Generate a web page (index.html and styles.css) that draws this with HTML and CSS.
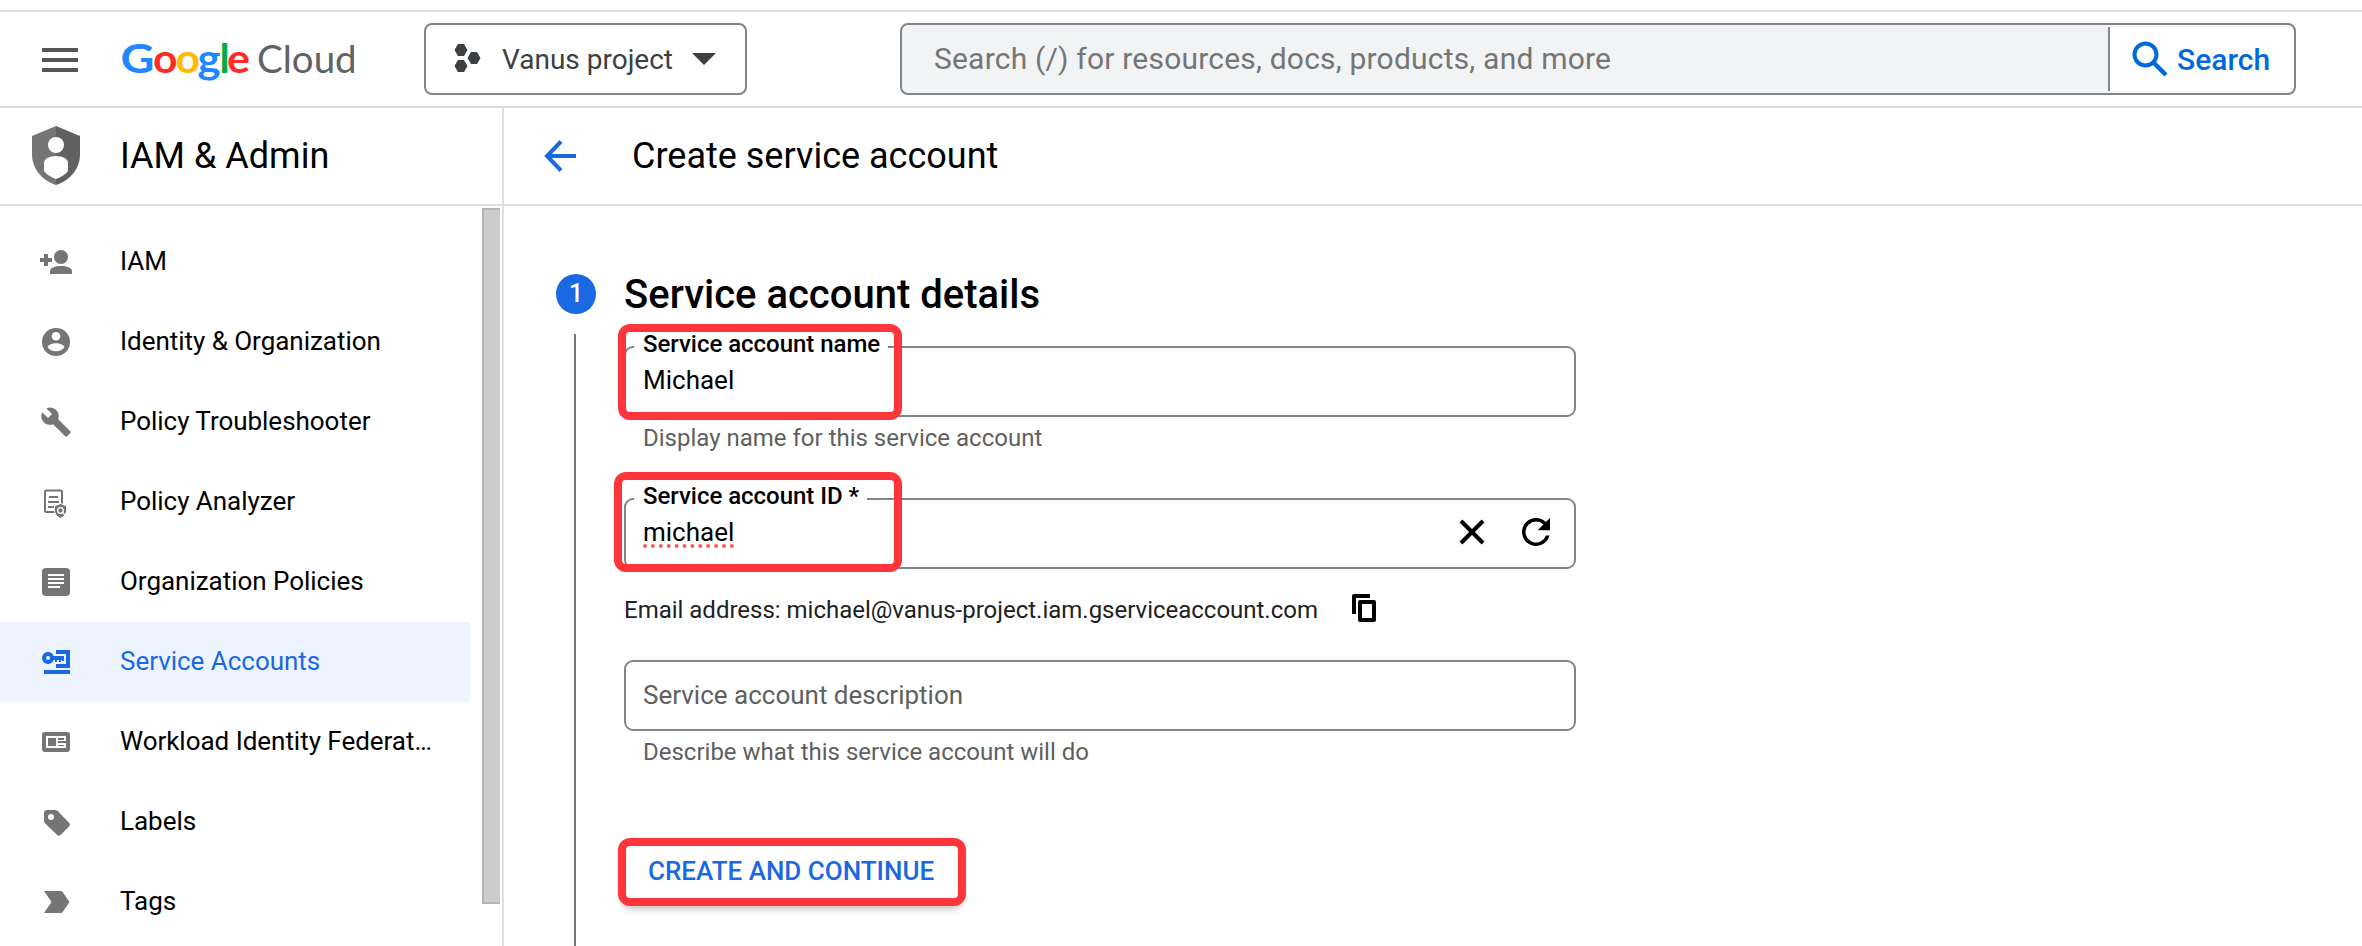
FILE: index.html
```html
<!DOCTYPE html>
<html lang="en">
<head>
<meta charset="utf-8">
<title>Create service account</title>
<link rel="stylesheet" href="styles.css">
</head>
<body>
<header class="topbar">
  <svg class="menu" width="36" height="24" viewBox="0 0 36 24"><path fill="#555" d="M0 0h36v4H0zM0 10h36v4H0zM0 20h36v4H0z"/></svg>
  <svg class="logo" width="240" height="60" viewBox="0 0 240 60">
    <g class="logo-google" lengthAdjust="spacingAndGlyphs">
      <text x="-1.500" y="40" fill="#2088ff" textLength="34" lengthAdjust="spacingAndGlyphs">G</text><text x="31" y="40" fill="#ff2c25" textLength="24.500" lengthAdjust="spacingAndGlyphs">o</text><text x="53.500" y="40" fill="#ffba00" textLength="24.500" lengthAdjust="spacingAndGlyphs">o</text><text x="75.500" y="40" fill="#2088ff" textLength="23" lengthAdjust="spacingAndGlyphs">g</text><text x="97.500" y="40" fill="#00ac47">l</text><text x="105" y="40" fill="#ff2c25" textLength="23" lengthAdjust="spacingAndGlyphs">e</text>
    </g>
    <text class="logo-cloud" x="135" y="40" fill="#5f6368">Cloud</text>
  </svg>
  <div class="project">
    <svg width="28" height="30" viewBox="0 0 28 30"><path fill="#3c4043" d="M4 1h6l3.500 6-3.500 6H4L.5 7zM17 9h6l3.500 6-3.500 6h-6l-3.500-6zM4 17h6l3.500 6-3.500 6H4L.5 23z"/></svg>
    <span class="project-name">Vanus project</span>
    <svg class="caret" width="24" height="12" viewBox="0 0 24 12"><path fill="#3c4043" d="M0 0h24L12 12z"/></svg>
  </div>
  <div class="search">
    <div class="search-input">Search (/) for resources, docs, products, and more</div>
    <div class="search-button">
      <svg width="36" height="36" viewBox="0 0 36 36"><circle cx="13.500" cy="13.500" r="11" fill="none" stroke="#0069dc" stroke-width="4"/><path d="M21 21l13 13" stroke="#0069dc" stroke-width="4.500"/></svg>
      <span>Search</span>
    </div>
  </div>
</header>
<div class="layout">
  <aside class="sidebar">
    <div class="side-title">
      <svg width="48" height="60" viewBox="0 0 48 60"><path fill="#757575" d="M24 0L0 10v18c0 14 9 26 24 31z"/><path fill="#616161" d="M24 0l24 10v18c0 14-9 26-24 31z"/><circle cx="24" cy="19" r="8" fill="#fff"/><path fill="#fff" d="M24 30c7 0 12 3 12 7v8c-3 4-7 6-12 8-5-2-9-4-12-8v-8c0-4 5-7 12-7z"/></svg>
      <h2>IAM &amp; Admin</h2>
    </div>
    <div class="side-body">
      <nav class="nav">
        <a class="item"><svg viewBox="0 0 36 36"><path d="M6 10h4v4h4v4h-4v4H6v-4H2v-4h4z"/><circle cx="23" cy="13" r="7"/><path d="M12 30v-3c0-3 5-5 11-5s11 2 11 5v3z"/></svg><span>IAM</span></a>
        <a class="item"><svg viewBox="0 0 36 36"><circle cx="18" cy="18" r="14"/><circle cx="18" cy="12.300" r="4.300" fill="#fff"/><path fill="#fff" d="M9.500 23c1-2.500 5-3.800 8.500-3.800s7.500 1.300 8.500 3.800c-2 3-5 4.300-8.500 4.300S11.500 26 9.500 23z"/></svg><span>Identity &amp; Organization</span></a>
        <a class="item"><svg viewBox="-1.500 -1.500 27 27"><path d="M22.700 19l-9.100-9.100c.9-2.300.4-5-1.500-6.900-2-2-5-2.400-7.400-1.300L9 6 6 9 1.600 4.700C.4 7.100.9 10.100 2.900 12.100c1.900 1.900 4.600 2.400 6.900 1.500l9.100 9.100c.4.400 1 .4 1.400 0l2.300-2.300c.5-.4.5-1.100.1-1.400z"/></svg><span>Policy Troubleshooter</span></a>
        <a class="item"><svg viewBox="0 0 36 36"><rect x="7" y="6.500" width="17" height="21.500" rx="1.500" fill="none" stroke="#757575" stroke-width="2"/><path d="M11 12h9v2h-9zM10 17h11v2H10zM10 22h8v2h-8z"/><path stroke="#fff" stroke-width="1" d="M22.500 19.500l6 2.300v4.500c0 4-2.500 6.500-6 8-3.500-1.500-6-4-6-8v-4.500z"/><circle cx="22.500" cy="26.500" r="2.800" fill="none" stroke="#fff" stroke-width="1.300"/><path stroke="#fff" stroke-width="1.300" d="M24.500 28.500l2.500 2.500"/></svg><span>Policy Analyzer</span></a>
        <a class="item"><svg viewBox="0 0 36 36"><rect x="4" y="4" width="28" height="28" rx="4"/><path fill="#fff" d="M10 10h16v2H10zM10 14h16v2H10zM10 18h16v2H10zM10 22h12v2H10z"/></svg><span>Organization Policies</span></a>
        <a class="item selected"><svg viewBox="0 0 36 36"><path d="M18 6h14v18H18v-4h10V10H18zM6 26h26v4H6z"/><path fill-rule="evenodd" d="M10 8a6 6 0 0 1 5.600 4H26v5h-2v-1h-1v2h-2v-2h-2v2h-2v-2h-1.400A6 6 0 1 1 10 8zm0 4a2 2 0 1 0 0 4 2 2 0 0 0 0-4z"/></svg><span>Service Accounts</span></a>
        <a class="item"><svg viewBox="0 0 36 36"><rect x="4" y="8" width="28" height="20" rx="3"/><path fill="#fff" d="M8 12h20v12H8z"/><path d="M10 14h8v8h-8zM20 14h6v2h-6zM20 17h8v2h-8zM20 21h6v1h-6z"/></svg><span>Workload Identity Federat…</span></a>
        <a class="item"><svg viewBox="0 0 36 36"><path fill-rule="evenodd" d="M9 6h8c1 0 2 .4 3 1.200l11 11.500c1.200 1.200 1.200 2.500 0 3.700l-8.500 8.700c-1 1-2.300 1-3.300 0L7.200 19.500C6.400 18.700 6 18 6 17V9c0-1.700 1.300-3 3-3zm4 4a3 3 0 1 0 0 6 3 3 0 0 0 0-6z"/></svg><span>Labels</span></a>
        <a class="item"><svg viewBox="0 0 36 36"><path d="M6 7h16c1.500 0 2.200.5 3 1.500L31.500 18 25 27.500c-.8 1-1.500 1.500-3 1.500H6l7.500-11z"/></svg><span>Tags</span></a>
      </nav>
      <div class="scrollbar"></div>
    </div>
  </aside>
  <main class="main">
    <div class="page-title">
      <svg width="32" height="32" viewBox="0 0 32 32"><path d="M17 1.500L3 16l14 14.500M3 16h29" fill="none" stroke="#1a68e2" stroke-width="4"/></svg>
      <h1>Create service account</h1>
    </div>
    <div class="step">
      <div class="rail"><div class="badge">1</div><div class="line"></div></div>
      <div class="form">
        <h3>Service account details</h3>
        <div class="field"><label>Service account name</label><span>Michael</span><i class="mark mark-name"></i></div>
        <p class="hint">Display name for this service account</p>
        <div class="field field-id"><label>Service account ID *</label><span class="misspelt">michael</span>
          <svg class="clear" width="26" height="26" viewBox="0 0 26 26"><path d="M2 2l22 22M24 2L2 24" stroke="#000" stroke-width="4"/></svg>
          <svg width="28" height="28" viewBox="4 4 16 16"><path d="M17.650 6.350A7.958 7.958 0 0 0 12 4a8 8 0 1 0 7.730 10h-2.080A6 6 0 1 1 12 6c1.660 0 3.140.690 4.220 1.780L13 11h7V4z"/></svg>
          <i class="mark mark-id"></i></div>
        <div class="email"><span>Email address: michael@vanus-project.iam.gserviceaccount.com</span>
          <svg width="24" height="28" viewBox="0 0 24 28"><path fill-rule="evenodd" d="M0 2a2 2 0 0 1 2-2h16v4H4v16H0zM6 8a2 2 0 0 1 2-2h14a2 2 0 0 1 2 2v18a2 2 0 0 1-2 2H8a2 2 0 0 1-2-2zm4 2v14h10V10z"/></svg></div>
        <div class="field field-desc"><span>Service account description</span></div>
        <p class="hint">Describe what this service account will do</p>
        <div class="create">CREATE AND CONTINUE<i class="mark mark-create"></i></div>
      </div>
    </div>
  </main>
</div>
</body>
</html>
```
FILE: styles.css
```css
* { box-sizing: border-box; }
body { margin: 0; height: 946px; overflow: hidden; background: #fff; color: #000; font-family: Roboto, "Liberation Sans", sans-serif; }
h1, h2, h3, p { margin: 0; font-weight: 400; }
svg { display: block; flex: none; }

.topbar { display: flex; align-items: center; height: 98px; margin-top: 10px; padding-left: 42px; border-top: 2px solid #e0e0e0; border-bottom: 2px solid #dadce0; }
.menu { margin-top: 2px; }
.logo { margin-left: 44px; margin-top: 7px; }
.logo-google, .logo-cloud { font-family: Lato, sans-serif; }
.logo-google { font-size: 41px; font-weight: 700; }
.logo-cloud { font-size: 38.500px; font-weight: 400; }
.project { display: flex; align-items: center; width: 323px; height: 72px; margin-left: 62px; padding-left: 28px; border: 2px solid #80868b; border-radius: 8px; color: #3c4043; font-size: 28px; }
.project svg { margin-top: -3px; }
.project-name { width: 170px; margin-left: 20px; white-space: nowrap; }
.project .caret { margin-left: 20px; margin-top: 0; }
.search { display: flex; width: 1396px; height: 72px; margin-left: 153px; padding: 2px 0; border: 2px solid #80868b; border-radius: 8px; background: #f1f3f4; font-size: 30px; }
.search-input { flex: 1; padding-left: 32px; line-height: 64px; color: #757575; letter-spacing: .2px; white-space: nowrap; }
.search-button { display: flex; align-items: center; gap: 9px; width: 186px; padding-left: 22px; border-left: 2px solid #80868b; border-radius: 0 6px 6px 0; background: #fff; color: #0069dc; font-weight: 500; }

.layout { display: flex; height: 838px; }
.sidebar { width: 504px; border-right: 2px solid #e0e0e0; }
.side-title, .page-title { display: flex; align-items: center; height: 98px; border-bottom: 2px solid #e0e0e0; }
.side-title { padding-left: 32px; gap: 40px; }
.side-title h2, .page-title h1 { font-size: 36px; line-height: 40px; margin-bottom: 1px; white-space: nowrap; }
.page-title { padding-left: 40px; gap: 56px; }
.side-body { display: flex; justify-content: space-between; padding-right: 2px; }
.nav { width: 470px; padding-top: 16px; }
.item { display: flex; align-items: center; height: 80px; padding-left: 38px; gap: 46px; font-size: 26px; white-space: nowrap; }
.item span { padding-bottom: 2px; letter-spacing: -.03px; }
.item svg { width: 36px; height: 36px; fill: #757575; }
.item.selected { background: #edf4ff; color: #1a68e2; }
.item.selected svg { fill: #1a68e2; }
.scrollbar { width: 18px; height: 696px; margin-top: 2px; background: #ccc; border: solid #b4b4b4; border-width: 2px 0 2px 2px; }

.main { flex: 1; }
.step { display: flex; gap: 28px; height: 740px; padding: 68px 0 0 52px; }
.rail { width: 40px; display: flex; flex-direction: column; }
.badge { height: 40px; border-radius: 50%; background: #1a68e2; color: #fff; font-size: 25px; font-weight: 500; line-height: 39px; text-align: center; }
.line { width: 2px; flex: 1; margin: 20px 0 0 18px; background: #757575; }
.form { width: 952px; }
.form h3 { height: 40px; margin-bottom: 32px; font-size: 40px; font-weight: 500; line-height: 42px; }
.field { position: relative; display: flex; align-items: center; height: 71px; padding: 0 24px 3px 17px; border: 2px solid #80868b; border-radius: 9px; font-size: 26px; }
.field label { position: absolute; left: 8px; top: -18px; padding: 0 8px 0 9px; background: #fff; font-size: 24px; font-weight: 500; line-height: 28px; letter-spacing: -.03px; white-space: nowrap; }
.hint { height: 24px; margin: 8px 0 49px 19px; color: #5f5f5f; font-size: 24px; line-height: 26px; }
.misspelt { text-decoration: underline dotted #ff5a55 4px; text-underline-offset: 3px; text-decoration-skip-ink: none; }
.clear { margin-left: auto; margin-right: 37px; }
.email { display: flex; align-items: center; gap: 34px; height: 32px; margin: 24px 0 35px; color: #202124; font-size: 24px; }
.email span { padding-top: 2px; letter-spacing: -.01px; }
.email svg { margin-bottom: 2px; }
.field-desc { padding-bottom: 1px; color: #5f5f5f; }
.create { position: relative; width: 336px; height: 64px; margin-top: 77px; padding-left: 24px; border-radius: 6px; box-shadow: 0 4px 8px rgba(0,0,0,.3); color: #1a68e2; font-size: 26px; font-weight: 500; line-height: 62px; white-space: nowrap; }
.mark { position: absolute; border: 8px solid #ff353b; border-radius: 12px; }
.mark-name { left: -8px; top: -24px; width: 284px; height: 96px; }
.mark-id { left: -12px; top: -28px; width: 288px; height: 100px; }
.mark-create { left: -6px; top: -2px; width: 348px; height: 68px; }
```
